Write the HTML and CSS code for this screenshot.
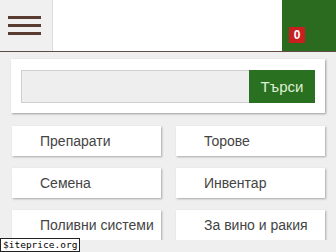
FILE: index.html
```html
<!DOCTYPE html>
<html lang="bg">
<head>
    <meta charset="UTF-8">
    <title>Начало</title>
    <link rel="stylesheet" href="styles.css">
</head>
<body>
    <div class="header">
        <div class="menu-btn">
            <span></span>
            <span></span>
            <span></span>
        </div>
        <div class="logo"></div>
        <div class="cart">
            <span class="cart-count">0</span>
        </div>
    </div>
    <div class="search-box">
        <input class="search-input" type="text">
        <button class="search-btn">Търси</button>
    </div>
    <div class="cat-list">
        <a class="cat" href="">Препарати</a>
        <a class="cat" href="">Торове</a>
        <a class="cat" href="">Семена</a>
        <a class="cat" href="">Инвентар</a>
        <a class="cat" href="">Поливни системи</a>
        <a class="cat" href="">За вино и ракия</a>
    </div>
    <div class="watermark">$iteprice.org</div>
</body>
</html>
```

FILE: styles.css
```css
body{
    margin: 0;
    background: #efefef;
    font-family: "Liberation Sans", Arial, sans-serif;
    overflow: hidden;
}
.header{
    display: flex;
    height: 51px;
    border-bottom: 1px solid #5e4d44;
}
.menu-btn{
    width: 44px;
    padding-left: 8px;
    border-right: 1px solid #dcdcdc;
    background: #f0f0f0;
    display: flex;
    flex-direction: column;
    justify-content: center;
    gap: 5px;
}
.menu-btn span{
    display: block;
    width: 33px;
    height: 3px;
    background: #5a3b31;
}
.logo{
    flex: 1;
    background: #fff;
}
.cart{
    width: 47px;
    padding: 27px 0 0 7px;
    background: #2a6b1f;
}
.cart-count{
    display: block;
    width: 16px;
    height: 16px;
    line-height: 16px;
    text-align: center;
    background: #c9201f;
    color: #fff;
    font-size: 12px;
    font-weight: bold;
}
.search-box{
    display: flex;
    margin: 7px 11px 0;
    padding: 11px 10px 10px;
    background: #fff;
    box-shadow: 1px 1px 2px rgba(0,0,0,.35);
}
.search-input{
    flex: 1;
    height: 33px;
    box-sizing: border-box;
    margin: 0;
    border: 1px solid #cfcfcf;
    border-right: 0;
    background: #eeeeee;
    outline: none;
}
.search-btn{
    width: 66px;
    height: 33px;
    margin: 0;
    border: 0;
    background: #2a7021;
    color: #dff0d4;
    font-family: inherit;
    font-size: 15px;
}
.cat-list{
    display: grid;
    grid-template-columns: 149px 149px;
    column-gap: 15px;
    row-gap: 12px;
    padding: 13px 11px 0 12px;
}
.cat{
    display: block;
    height: 30px;
    line-height: 30px;
    padding-left: 28px;
    background: #fff;
    box-shadow: 1px 1px 2px rgba(0,0,0,.3);
    color: #444;
    font-size: 14px;
    text-decoration: none;
}
.watermark{
    position: fixed;
    left: 0;
    bottom: 0;
    padding: 0 2px;
    height: 12px;
    line-height: 12px;
    border: 1px solid #222;
    background: #fff;
    color: #000;
    font-family: "DejaVu Sans Mono", monospace;
    font-size: 9.5px;
}
```
